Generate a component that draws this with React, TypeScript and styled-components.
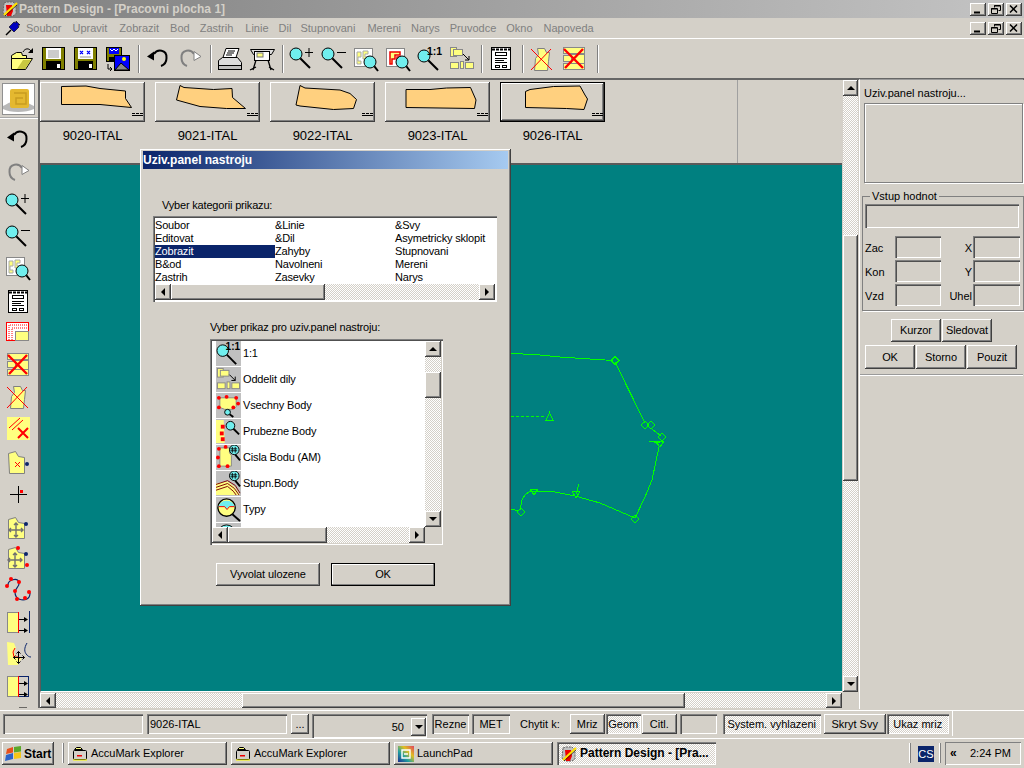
import React from "react";
import styled, { createGlobalStyle, css } from "styled-components";

const FACE = "#d4d0c8";
const FONT = `"Liberation Sans", Arial, sans-serif`;

const raised = css`
  background-color: ${FACE};
  box-shadow: inset -1px -1px #404040, inset 1px 1px #fff, inset -2px -2px #808080;
`;
const sunken = css`
  box-shadow: inset 1px 1px #808080, inset 2px 2px #505050, inset -1px -1px #fff;
`;
const dither = css`
  background: repeating-conic-gradient(#fff 0 25%, ${FACE} 0 50%) 0 0 / 2px 2px;
`;

const Global = createGlobalStyle`
  html, body { margin: 0; padding: 0; background: ${FACE}; }
  * { box-sizing: border-box; }
  #root { width: 1024px; height: 768px; overflow: hidden; }
`;

const Page = styled.div`
  position: relative;
  width: 1024px;
  height: 768px;
  overflow: hidden;
  display: flex;
  flex-direction: column;
  background: ${FACE};
  font: 11px/13px ${FONT};
  color: #000;
`;

const TitleBar = styled.div`
  height: 18px;
  display: flex;
  align-items: center;
  padding: 0 2px 0 2px;
  background: linear-gradient(90deg, #808080, #c4c4c4);
  color: ${FACE};
  font: bold 12px/16px ${FONT};
`;
const TitleText = styled.span`
  margin-left: 1px;
  flex: 1;
`;
const MenuBar = styled.div`
  height: 20px;
  display: flex;
  align-items: center;
  padding: 0 2px 0 5px;
  color: #808080;
`;
const MenuItem = styled.span<{ $ml: number }>`
  margin-left: ${(p) => p.$ml}px;
  white-space: nowrap;
`;
const MenuFill = styled.div`
  flex: 1;
`;
const WinBtns = styled.div`
  display: flex;
  gap: 2px;
`;
const WinBtn = styled.div`
  width: 16px;
  height: 13px;
  display: flex;
  align-items: center;
  justify-content: center;
  ${raised}
`;

const ToolBar = styled.div`
  height: 42px;
  display: flex;
  align-items: flex-start;
  padding: 7px 0 0 5px;
  border-top: 1px solid #fff;
  border-bottom: 2px solid #666;
`;
const Slot = styled.div`
  width: 32px;
  height: 26px;
  display: flex;
  justify-content: center;
`;
const Sep = styled.div<{ $l: number }>`
  width: 2px;
  height: 28px;
  margin: -1px 2px 0 ${(p) => p.$l}px;
  background: linear-gradient(90deg, #808080 50%, #fff 50%);
`;

const Main = styled.div`
  height: 630px;
  display: flex;
`;
const Dock = styled.div`
  width: 40px;
  height: 628px;
  overflow: hidden;
  flex: none;
  border-right: 2px solid #666;
`;
const LogoBox = styled.div`
  margin: 3px 0 0 2px;
  width: 33px;
  height: 32px;
  background: #fff;
  border: 1px solid #909090;
  display: flex;
`;
const DockRule = styled.div`
  height: 1px;
  margin-top: 3px;
  width: 38px;
  background: #fff;
  box-shadow: 0 -1px #a8a8a8;
`;
const DockIcons = styled.div`
  margin-top: 5px;
  display: flex;
  flex-direction: column;
`;
const DockSlot = styled.div<{ $h: number }>`
  height: ${(p) => p.$h}px;
  padding: 3px 0 0 5px;
  flex: none;
`;

const Center = styled.div`
  width: 820px;
  flex: none;
  display: flex;
  flex-direction: column;
`;
const CenterTop = styled.div`
  height: 612px;
  display: flex;
`;
const Stage = styled.div`
  width: 802px;
  display: flex;
  flex-direction: column;
`;
const Strip = styled.div`
  height: 83px;
  flex: none;
`;
const Tabs = styled.div`
  width: 698px;
  height: 83px;
  padding-top: 2px;
  display: flex;
  gap: 10px;
  border-right: 1px solid #a0a0a0;
`;
const Tab = styled.div`
  width: 105px;
  display: flex;
  flex-direction: column;
  align-items: center;
`;
const TabBtn = styled.div<{ $active?: boolean }>`
  width: 105px;
  height: 40px;
  ${raised}
  ${(p) =>
    p.$active &&
    css`
      box-shadow: inset 0 0 0 1px #000, inset -2px -2px #404040, inset 2px 2px #fff, inset -3px -3px #808080;
    `}
`;
const TabLabel = styled.div`
  margin-top: 6px;
  font-size: 13px;
  line-height: 15px;
  white-space: nowrap;
`;
const Canvas = styled.div`
  flex: 1;
  position: relative;
  background: #008080;
  border-top: 2px solid #5a5a5a;
  border-left: 1px solid #5a5a5a;
  border-bottom: 1px solid #fff;
  overflow: hidden;
`;
const Drawing = styled.svg`
  position: absolute;
  left: 0;
  top: 0;
`;

const ScrollBar = styled.div<{ $v?: boolean; $size: number }>`
  display: flex;
  flex-direction: ${(p) => (p.$v ? "column" : "row")};
  flex: none;
  ${(p) => (p.$v ? `width: ${p.$size}px; height: 100%;` : `height: ${p.$size}px; width: 100%;`)}
`;
const ScrollArrow = styled.div<{ $v?: boolean }>`
  flex: none;
  ${(p) => (p.$v ? "height: 16px;" : "width: 16px;")}
  display: flex;
  align-items: center;
  justify-content: center;
  ${raised}
`;
const Tri = styled.div<{ $d: "u" | "d" | "l" | "r"; $s?: number }>`
  width: 0;
  height: 0;
  border-style: solid;
  border-color: transparent;
  ${(p) => {
    const s = p.$s ?? 4;
    if (p.$d === "u") return `border-width: 0 ${s}px ${s}px; border-bottom-color:#000;`;
    if (p.$d === "d") return `border-width: ${s}px ${s}px 0; border-top-color:#000;`;
    if (p.$d === "l") return `border-width: ${s}px ${s}px ${s}px 0; border-right-color:#000;`;
    return `border-width: ${s}px 0 ${s}px ${s}px; border-left-color:#000;`;
  }}
`;
const ScrollTrack = styled.div<{ $v?: boolean }>`
  flex: 1;
  min-width: 0;
  min-height: 0;
  display: flex;
  flex-direction: ${(p) => (p.$v ? "column" : "row")};
  ${dither}
`;
const ScrollThumb = styled.div<{ $v?: boolean; $start: number; $len: number }>`
  flex: none;
  ${raised}
  ${(p) =>
    p.$v
      ? `margin-top:${p.$start}px; height:${p.$len}px;`
      : `margin-left:${p.$start}px; width:${p.$len}px;`}
`;

const Scroll = ({ v, size = 16, start, len }: { v?: boolean; size?: number; start: number; len: number }) => (
  <ScrollBar $v={v} $size={size}>
    <ScrollArrow $v={v}>
      <Tri $d={v ? "u" : "l"} />
    </ScrollArrow>
    <ScrollTrack $v={v}>
      <ScrollThumb $v={v} $start={start} $len={len} />
    </ScrollTrack>
    <ScrollArrow $v={v}>
      <Tri $d={v ? "d" : "r"} />
    </ScrollArrow>
  </ScrollBar>
);

const HScrollRow = styled.div`
  height: 15px;
  margin-top: 1px;
  width: 802px;
`;
const VScrollCol = styled.div`
  width: 15px;
  margin-left: 1px;
  height: 612px;
`;

const RightPanel = styled.div`
  width: 164px;
  height: 630px;
  flex: none;
  margin-left: -1px;
  border-left: 1px solid #fff;
  border-top: 1px solid #9a9a9a;
  margin-top: -1px;
  display: flex;
  flex-direction: column;
  padding-left: 2px;
`;
const PanelCaption = styled.div`
  margin: 7px 0 0 2px;
  height: 13px;
  white-space: nowrap;
`;
const PanelBox = styled.div`
  margin: 3px 0 0 2px;
  width: 159px;
  height: 80px;
  border: 1px solid #808080;
  box-shadow: 1px 1px #fff, inset 1px 1px #fff;
`;
const Group = styled.fieldset`
  margin: 7px 0 0 0;
  width: 161px;
  height: 121px;
  padding: 1px 3px 0 2px;
  border: 1px solid #808080;
  box-shadow: 1px 1px #fff;
`;
const GroupLegend = styled.legend`
  margin-left: 5px;
  padding: 0 2px;
  line-height: 13px;
`;
const Sunk = styled.div<{ $w?: number; $h: number }>`
  width: ${(p) => (p.$w ? `${p.$w}px` : "100%")};
  height: ${(p) => p.$h}px;
  ${sunken}
`;
const FieldGrid = styled.div`
  margin-top: 8px;
  display: grid;
  grid-template-columns: 30px 46px 32px 47px;
  grid-auto-rows: 22px;
  row-gap: 2px;
  align-items: center;
`;
const FieldLabel = styled.div<{ $right?: boolean }>`
  text-align: ${(p) => (p.$right ? "right" : "left")};
  padding: 2px ${(p) => (p.$right ? 1 : 0)}px 0 0;
`;
const PanelRow = styled.div<{ $ml: number; $mt: number }>`
  display: flex;
  gap: 1px;
  margin: ${(p) => p.$mt}px 0 0 ${(p) => p.$ml}px;
`;
const PushBtn = styled.div<{ $w: number; $h: number; $def?: boolean }>`
  width: ${(p) => p.$w}px;
  height: ${(p) => p.$h}px;
  display: flex;
  align-items: center;
  justify-content: center;
  white-space: nowrap;
  letter-spacing: -0.1px;
  ${raised}
  ${(p) =>
    p.$def &&
    css`
      box-shadow: inset 0 0 0 1px #000, inset -2px -2px #808080, inset 2px 2px #fff;
    `}
`;
const PanelRule = styled.div`
  margin: 5px 0 0 -2px;
  height: 1px;
  background: #9a9a9a;
  box-shadow: 0 1px #fff;
`;

const StatusBar = styled.div`
  height: 28px;
  flex: none;
  border-top: 1px solid #fff;
  padding: 3px 0 0 3px;
  display: flex;
  align-items: flex-start;
  position: relative;
`;
const SField = styled.div<{ $w: number; $h?: number; $ml: number; $align?: string }>`
  width: ${(p) => p.$w}px;
  height: ${(p) => p.$h ?? 20}px;
  margin-left: ${(p) => p.$ml}px;
  display: flex;
  align-items: center;
  justify-content: ${(p) => p.$align ?? "center"};
  padding: 0 3px;
  white-space: nowrap;
  ${sunken}
`;
const SBtn = styled.div<{ $w: number; $ml: number; $pressed?: boolean }>`
  width: ${(p) => p.$w}px;
  height: 20px;
  margin-left: ${(p) => p.$ml}px;
  display: flex;
  align-items: center;
  justify-content: center;
  white-space: nowrap;
  ${(p) =>
    p.$pressed
      ? css`
          ${dither}
          ${sunken}
        `
      : raised}
`;
const SText = styled.div<{ $ml: number }>`
  margin-left: ${(p) => p.$ml}px;
  line-height: 20px;
  white-space: nowrap;
`;
const Combo = styled.div`
  width: 115px;
  height: 24px;
  margin-left: 3px;
  display: flex;
  align-items: flex-end;
  justify-content: flex-end;
  padding: 0 1px 2px 0;
  ${sunken}
`;
const ComboValue = styled.span`
  margin: 0 7px 0 0;
  line-height: 17px;
`;
const ComboBtn = styled.div`
  width: 15px;
  height: 18px;
  display: flex;
  align-items: center;
  justify-content: center;
  ${raised}
`;
const StatusEnd = styled.div`
  margin-left: 3px;
  height: 25px;
  margin-top: -3px;
  width: 1px;
  background: #fff;
`;

const TaskBar = styled.div`
  height: 30px;
  flex: none;
  border-top: 1px solid #fff;
  box-shadow: 0 -1px ${FACE};
  padding: 3px 3px 0 2px;
  display: flex;
  align-items: flex-start;
`;
const StartBtn = styled.div`
  width: 52px;
  height: 23px;
  display: flex;
  align-items: center;
  padding-left: 3px;
  gap: 2px;
  font: bold 12px/14px ${FONT};
  ${raised}
`;
const Groove = styled.div<{ $ml: number }>`
  width: 2px;
  height: 20px;
  margin: 1px 0 0 ${(p) => p.$ml}px;
  background: linear-gradient(90deg, #fff 50%, #808080 50%);
`;
const TaskBtn = styled.div<{ $ml: number; $active?: boolean }>`
  width: 159px;
  height: 23px;
  margin-left: ${(p) => p.$ml}px;
  display: flex;
  align-items: center;
  padding-left: 4px;
  gap: 3px;
  white-space: nowrap;
  ${(p) =>
    p.$active
      ? css`
          ${dither}
          ${sunken}
          font-weight: bold;
          font-size: 12px;
        `
      : raised}
`;
const Tray = styled.div`
  margin-left: auto;
  display: flex;
  align-items: flex-start;
`;
const Lang = styled.div`
  width: 16px;
  height: 16px;
  margin: 4px 0 0 7px;
  background: #0a246a;
  color: #fff;
  text-align: center;
  line-height: 16px;
`;
const Clock = styled.div`
  width: 76px;
  height: 23px;
  margin-left: 4px;
  display: flex;
  align-items: center;
  padding-left: 5px;
  box-shadow: inset 1px 1px #808080, inset -1px -1px #fff;
`;
const ClockChev = styled.span`
  font-weight: bold;
  font-size: 12px;
  width: 20px;
`;

const Dialog = styled.div`
  position: absolute;
  left: 140px;
  top: 149px;
  width: 371px;
  height: 457px;
  padding: 2px 3px;
  display: flex;
  flex-direction: column;
  ${raised}
`;
const DlgTitle = styled.div`
  height: 18px;
  flex: none;
  background: linear-gradient(90deg, #0a246a, #a6caf0);
  color: #fff;
  font: bold 12px/18px ${FONT};
`;
const DlgLabel = styled.div<{ $ml: number; $mt: number }>`
  margin: ${(p) => p.$mt}px 0 0 ${(p) => p.$ml}px;
  height: 14px;
  line-height: 14px;
  letter-spacing: -0.18px;
  white-space: nowrap;
`;
const CatList = styled.div`
  margin: 4px 0 0 10px;
  width: 344px;
  height: 86px;
  padding: 2px;
  background: #fff;
  overflow: hidden;
  position: relative;
  ${sunken}
`;
const CatGrid = styled.div`
  display: grid;
  grid-template-columns: repeat(3, 120px);
  grid-auto-rows: 13px;
  height: 66px;
  padding-top: 1px;
`;
const CatCell = styled.div<{ $sel?: boolean }>`
  line-height: 13px;
  white-space: nowrap;
  letter-spacing: -0.18px;
  ${(p) => p.$sel && `background:#0a246a;color:#fff;`}
`;
const CmdList = styled.div`
  margin: 5px 0 0 67px;
  width: 233px;
  height: 206px;
  padding: 2px;
  background: ${FACE};
  ${sunken}
`;
const CmdTop = styled.div`
  height: 186px;
  display: flex;
`;
const CmdRows = styled.div`
  width: 213px;
  height: 186px;
  overflow: hidden;
  background: #fff;
  padding-left: 4px;
`;
const CmdRow = styled.div`
  height: 26px;
  display: flex;
  align-items: flex-start;
`;
const CmdIcon = styled.div`
  width: 25px;
  height: 25px;
  background: #c0c0c0;
  flex: none;
`;
const CmdText = styled.div`
  margin-left: 2px;
  line-height: 25px;
  font-size: 11px;
  letter-spacing: -0.15px;
  white-space: nowrap;
`;
const CmdBottom = styled.div`
  width: 213px;
`;
const DlgButtons = styled.div`
  display: flex;
  gap: 11px;
  margin: 18px 0 0 73px;
`;

/* ---------- drawings ---------- */
const Ico = styled.svg`
  display: block;
  flex: none;
`;
const Y = "#ffff80";
const C = "#70eeee";
const G = "#808080";

const Lens = ({ x = 7, y = 8, r = 6, hx = 21, hy = 22 }: { x?: number; y?: number; r?: number; hx?: number; hy?: number }) => (
  <>
    <line x1={x + r * 0.7} y1={y + r * 0.7} x2={hx} y2={hy} stroke="#000" strokeWidth={2} />
    <circle cx={x} cy={y} r={r} fill={C} stroke="#000" strokeWidth={1} />
  </>
);
const Floppy = ({ children }: { children?: React.ReactNode }) => (
  <>
    <rect x="2.5" y="1.5" width="22" height="22" fill="#808000" stroke="#000" />
    <rect x="6" y="2" width="15" height="11" fill="#fff" />
    <rect x="6" y="15" width="15" height="8" fill="#000" />
    <rect x="17" y="18" width="3" height="4" fill="#fff" />
    {children}
  </>
);
const Piece = ({ d }: { d: string }) => <path d={d} fill={Y} stroke={G} />;
const Dot = ({ x, y, c = "#f00", r = 2 }: { x: number; y: number; c?: string; r?: number }) => <circle cx={x} cy={y} r={r} fill={c} />;
const Move = ({ x, y }: { x: number; y: number }) => (
  <path
    d={`M${x - 7} ${y}h14M${x} ${y - 7}v14M${x - 5} ${y - 2}l-2 2 2 2M${x + 5} ${y - 2}l2 2-2 2M${x - 2} ${y - 5}l2-2 2 2M${x - 2} ${y + 5}l2 2 2-2`}
    stroke="#707070"
    strokeWidth="1.4"
    fill="none"
  />
);
const ARC = "M9 8C12 3 22 3 21.5 12C21.5 16 19 19 16 20";

const icons: Record<string, React.ReactNode> = {
  open: (
    <>
      <path d="M3.5 9.5l5-3h5l1 3h4v4h-15z" fill={Y} stroke="#000" />
      <path d="M3.5 23.5v-11h21l-7 11z" fill={Y} stroke="#000" />
      <path d="M9 23l6-9h8l-6 9z" fill="#c8c840" />
      <path d="M15 6c2-4 6-4 8-1" fill="none" stroke="#000" />
      <path d="M25 2v5h-5z" fill="#000" />
    </>
  ),
  save: <Floppy><path d="M8 5h11M8 7h11M8 9h11M8 11h11" stroke="#999" /></Floppy>,
  saveas: <Floppy><path d="M8 5l3 3m0-3l-3 3M15 5l3 3m0-3l-3 3" stroke="#00f" strokeWidth="1.2" /><path d="M8 11h11" stroke="#999" /></Floppy>,
  saveall: (
    <>
      <rect x="2.5" y="1.5" width="15" height="14" fill="#808000" stroke="#000" />
      <rect x="5" y="2" width="10" height="6" fill="#00f" />
      <path d="M6 3l2 2 2-2 2 2 2-2" stroke="#fff" fill="none" />
      <rect x="5" y="11" width="10" height="5" fill="#000" />
      <path d="M4 18v5h4M6 21l2 2-2 2" stroke="#000" fill="none" />
      <rect x="10.5" y="9.5" width="15" height="15" fill="#00f" stroke="#000" />
      <circle cx="20" cy="13" r="2" fill="#ff0" />
      <path d="M11 24l6-7 8 7z" fill="#888" stroke="#000" />
    </>
  ),
  undo: (
    <>
      <path d={ARC} fill="none" stroke="#000" strokeWidth="2" />
      <path d="M2 10.5L9 5.500 9 14.500z" fill="#000" />
    </>
  ),
  redo: (
    <g transform="translate(26 0) scale(-1 1)">
      <path d={ARC} fill="none" stroke="#808080" strokeWidth="2" />
      <path d="M2 10.5L9 5.500 9 14.500z" fill="#fff" stroke="#808080" />
    </g>
  ),
  print: (
    <>
      <path d="M9 2.5h13l-3 9H6z" fill="#fff" stroke="#000" />
      <path d="M11 5h7M10 7h7M9 9h6" stroke="#000" />
      <path d="M1.5 14.5l4-3h15l4 5v5h-23z" fill="#ddd" stroke="#000" />
      <rect x="1.5" y="19.5" width="23" height="4" fill="#c0c0c0" stroke="#000" />
    </>
  ),
  plot: (
    <>
      <path d="M1.5 3.5h24l-3 5h-18z" fill="#ddd" stroke="#000" />
      <rect x="5.5" y="5.5" width="15" height="9" fill="#fff" stroke="#000" />
      <rect x="8" y="7" width="6" height="4" fill={Y} stroke="#777" />
      <path d="M7 14L4 24M19 14l3 10M1 24l6-3M20 21l5 3" stroke="#000" strokeWidth="1.3" fill="none" />
    </>
  ),
  zin: (<><Lens /><path d="M16 6.500h8M20 2v9" stroke="#000" /></>),
  zout: (<><Lens /><path d="M16 6.500h9" stroke="#000" /></>),
  zfit: (
    <>
      <rect x="1.5" y="2.5" width="18" height="18" fill="#fff" stroke="#888" />
      <path d="M4 6h4v5H5v4h3v3H4zM10 5h5v3h-3v3h3v2h-5z" fill={Y} stroke="#aaa" />
      <Lens x={17} y={16} r={6} hx={25} hy={25} />
    </>
  ),
  zsel: (
    <>
      <rect x="1.5" y="2.5" width="18" height="18" fill="#fff" stroke="#888" />
      <path d="M5 6h10v3h-5v4H7v5H5zM12 11h5v2h-3v4h-2z" fill={Y} stroke="#e00" strokeWidth="1.5" />
      <Lens x={17} y={16} r={6} hx={25} hy={25} />
    </>
  ),
  one: (
    <>
      <Lens x={7} y={10} r={6} hx={21} hy={24} />
      <text x="10" y="9" fontFamily={FONT} fontSize="10.500" fontWeight="bold" fill="#000">1:1</text>
    </>
  ),
  sep: (
    <>
      <rect x="1.5" y="1.5" width="6" height="9" fill={Y} stroke="#888" />
      <rect x="4.5" y="3.5" width="9" height="6" fill={Y} stroke="#888" />
      <path d="M14 8l6 6M20 10v4h-4" stroke="#000" fill="none" />
      <rect x="1.5" y="16.5" width="8" height="6" fill={Y} stroke="#888" />
      <rect x="11.5" y="15.5" width="3" height="7" fill={Y} stroke="#888" />
      <rect x="16.5" y="16.5" width="8" height="6" fill={Y} stroke="#888" />
    </>
  ),
  doc: (
    <>
      <rect x="3.5" y="1.5" width="19" height="22" fill="#fff" stroke="#000" />
      <path d="M4 3.5h18" stroke="#000" strokeWidth="2" strokeDasharray="3 1" />
      <rect x="7.5" y="6.5" width="11" height="3" fill="#fff" stroke="#000" />
      <path d="M7 12.500h12M7 14.500h9M7 16.500h12" stroke="#000" />
      <rect x="7.5" y="19.5" width="4" height="2" fill="#fff" stroke="#000" />
      <rect x="14.5" y="19.5" width="4" height="2" fill="#fff" stroke="#000" />
    </>
  ),
  xpiece: (
    <>
      <Piece d="M8.5 2.5h7l2 4h3l-1 9-1 9h-13l1-12 3-4z" />
      <path d="M2 3l21 21M22 3L2 24" stroke="#f00" />
    </>
  ),
  xpieces: (
    <>
      <rect x="2.5" y="1.5" width="21" height="6" fill={Y} stroke="#888" />
      <rect x="2.5" y="9.5" width="8" height="6" fill={Y} stroke="#888" />
      <rect x="10.5" y="8.5" width="13" height="9" fill={Y} stroke="#888" />
      <rect x="2.5" y="17.5" width="21" height="6" fill={Y} stroke="#888" />
      <path d="M3 3l19 19M22 3L4 22" stroke="#f00" strokeWidth="2.4" />
    </>
  ),
  frames: (
    <>
      <rect x="1.5" y="2.5" width="22" height="18" fill="#fff" stroke="#f00" />
      <path d="M4 20V5h18M7 20V8h15" fill="none" stroke="#f00" strokeDasharray="1 1" />
      <rect x="10.5" y="11.5" width="13" height="9" fill={Y} stroke="#888" />
    </>
  ),
  linesx: (
    <>
      <rect x="2" y="1" width="23" height="23" fill={Y} />
      <path d="M4 12L15 2M7 14L18 4" stroke="#f00" />
      <path d="M13 12l10 10M23 12L13 22" stroke="#f00" strokeWidth="2" />
    </>
  ),
  piecex: (
    <>
      <Piece d="M3.5 4.5l7-2 3 5 6 1v16h-15z" />
      <path d="M10 13l5 5m0-5l-5 5" stroke="#f00" />
      <Dot x={22} y={15} c="#0a246a" />
    </>
  ),
  cross: (
    <>
      <path d="M5 14.500h17M13.500 6v17" stroke="#000" />
      <rect x="15" y="10" width="3" height="3" fill="#f00" />
    </>
  ),
  move1: (
    <>
      <Piece d="M3.5 5.5l7-2 3 5 6 1v15h-16z" />
      <Move x={11} y={16} />
      <Dot x={21} y={10} c="#0a246a" />
    </>
  ),
  move2: (
    <>
      <Piece d="M3.5 5.5l7-2 3 5 6 1v15h-16z" />
      <Move x={10} y={16} />
      <Dot x={13} y={4} />
      <Dot x={21} y={10} c="#0a246a" />
      <Dot x={22} y={21} />
    </>
  ),
  curve: (
    <>
      <path d="M3 8C3 3 12 0 14 5c1 5-4 6-4 10 0 8 8 9 12 7 2-1 3-3 3-6" fill="none" stroke="#0a246a" strokeWidth="1.2" />
      <Dot x={6} y={2} /><Dot x={2} y={9} /><Dot x={14} y={5} /><Dot x={10} y={14} /><Dot x={12} y={22} /><Dot x={20} y={21} /><Dot x={24} y={15} />
    </>
  ),
  shift1: (
    <>
      <rect x="2.5" y="3.5" width="11" height="20" fill={Y} stroke="#888" />
      <path d="M13.5 3v21" stroke="#f00" />
      <path d="M14 10.500h7M14 21.500h7" stroke="#000" />
      <path d="M19 8l4 2.500-4 2.500zM19 19l4 2.500-4 2.500z" fill="#000" />
      <path d="M24.500 2v22" stroke="#0a246a" />
    </>
  ),
  shift2: (
    <>
      <path d="M2 2l7 1 2 5-2 4 2 5 6 0-4 8H3z" fill={Y} />
      <path d="M10 8l-2 4 1 5h5v2" stroke="#f00" fill="none" />
      <path d="M13 14v12M8 20h11M13 14l-2 2m2-2l2 2M13 26l-2-2m2 2l2-2M8 20l2-2m-2 2l2 2M19 20l-2-2m2 2l-2 2" stroke="#000" transform="translate(.5 -2.500)" />
      <path d="M22 3c-3 5-3 9 0 12 1 1 2 2 4 2" stroke="#0a246a" fill="none" />
    </>
  ),
  shift3: (
    <>
      <rect x="2.5" y="3.5" width="11" height="20" fill={Y} stroke="#888" />
      <rect x="13.5" y="3.5" width="10" height="20" fill="none" stroke="#0a246a" />
      <path d="M13.5 3v21" stroke="#f00" />
      <path d="M14 10.500h7M14 21.500h7" stroke="#000" />
      <path d="M19 8l4 2.500-4 2.500zM19 19l4 2.500-4 2.500z" fill="#000" />
    </>
  ),
  clip: (
    <>
      <rect x="2" y="4" width="9" height="22" fill={Y} />
      <path d="M14 3h8" stroke="#000" />
    </>
  ),
  allpts: (
    <>
      <path d="M4 5h17v9l-3 3H9l-5-2z" fill={Y} stroke="#888" />
      <Dot x={3} y={5} /><Dot x={11} y={4} /><Dot x={21} y={5} /><Dot x={23} y={11} /><Dot x={3} y={15} /><Dot x={18} y={15} />
      <Lens x={12} y={20} r={3} hx={18} hy={25} />
    </>
  ),
  midpts: (
    <>
      <path d="M0 1h8l1 24H0z" fill={Y} />
      <rect x="5" y="6" width="4" height="4" fill="#f00" />
      <rect x="4" y="13" width="4" height="4" fill="#f00" />
      <rect x="5" y="19" width="4" height="4" fill="#f00" />
      <Lens x={15} y={7} r={4.5} hx={24} hy={16} />
    </>
  ),
  nums: (
    <>
      <path d="M4 3h10v5l2 3v11H4z" fill={Y} stroke="#888" />
      <Dot x={3} y={4} /><Dot x={10} y={2} /><Dot x={2} y={13} /><Dot x={3} y={22} /><Dot x={12} y={22} />
      <line x1="20" y1="10" x2="25" y2="16" stroke="#000" strokeWidth="2" />
      <circle cx="19" cy="5" r="5" fill={C} stroke="#000" />
      <path d="M17 2v6M20 2v6M15 4h7M15 6h7" stroke="#000" strokeWidth=".9" />
    </>
  ),
  grade: (
    <>
      <path d="M0 25V13l12-2 7 5 6 9z" fill={Y} />
      <path d="M0 14l12-4 8 5 5 8M0 17l12-4 7 5 5 7M0 20l12-4 6 5 3 4" fill="none" stroke="#800000" />
      <line x1="20" y1="10" x2="25" y2="16" stroke="#000" strokeWidth="2" />
      <circle cx="19" cy="5" r="5" fill={C} stroke="#000" />
      <path d="M17 2v6M20 2v6M15 4h7M15 6h7" stroke="#000" strokeWidth=".9" />
    </>
  ),
  types: (
    <>
      <line x1="17" y1="18" x2="25" y2="25" stroke="#000" strokeWidth="2" />
      <circle cx="11" cy="11" r="9" fill="#ffff80" stroke="#000" strokeWidth="1.4" />
      <path d="M2.5 10a9 9 0 0 1 17 0h-6l-2.500 3-2.500-3z" fill={C} />
      <path d="M3 10h6l2.500 3 2.500-3h5" fill="none" stroke="#e00" />
    </>
  ),
  partial: (
    <>
      <circle cx="11" cy="11" r="9" fill={C} stroke="#000" />
    </>
  ),
};

const Icon = ({ n, size = 26 }: { n: string; size?: number }) => (
  <Ico width={size} height={size} viewBox="0 0 26 26">{icons[n]}</Ico>
);

const Dash = () => (
  <path d="M92 31.500h3M96 31.500h3M100 31.500h3M92 33.500h11" stroke="#000" />
);
const tabs = [
  { label: "9020-ITAL", pts: "21.500,4.500 46,4 60,6.500 85.500,9 85.500,16.500 91.500,25.500 60,22.500 21.500,22.500" },
  { label: "9021-ITAL", pts: "25,3.500 29,5.500 58.500,7.500 77,6.500 77.500,15.500 90.500,26.500 71.500,26.500 45,24.500 21.500,18" },
  { label: "9022-ITAL", pts: "30,3.500 35,6 70,8 80,11.500 86.500,17.500 83.500,26.500 63.500,27.500 30,24 26,23" },
  { label: "9023-ITAL", pts: "21,7.500 45,7.500 61.500,6 85.500,5.500 91,18 89.500,26.500 21,25.500" },
  { label: "9026-ITAL", pts: "25.500,9.500 30,7.500 53.500,4.500 80,4 85,13 87.500,17 84,27.500 66.500,26.500 25.500,25.500" },
];

const menus: [string, number][] = [
  ["Soubor", 5], ["Upravit", 11], ["Zobrazit", 12], ["Bod", 11], ["Zastrih", 10], ["Linie", 12], ["Dil", 10],
  ["Stupnovani", 9], ["Mereni", 12], ["Narys", 10], ["Pruvodce", 10], ["Okno", 10], ["Napoveda", 11],
];

const WinControls = () => (
  <WinBtns>
    <WinBtn>
      <Ico width="10" height="9" viewBox="0 0 10 9"><path d="M1 7.500h6" stroke="#000" strokeWidth="2" /></Ico>
    </WinBtn>
    <WinBtn>
      <Ico width="10" height="9" viewBox="0 0 10 9"><path d="M3.500 2.500v-2h6v5h-2M.5 3.500h6v5h-6z" fill="none" stroke="#000" /><path d="M3 1h6M0 4h6" stroke="#000" /></Ico>
    </WinBtn>
    <WinBtn>
      <Ico width="10" height="9" viewBox="0 0 10 9"><path d="M1 .5l7 7M8 .5l-7 7" stroke="#000" strokeWidth="1.500" /></Ico>
    </WinBtn>
  </WinBtns>
);

const AppGlyph = ({ size = 16 }: { size?: number }) => (
  <Ico width={size} height={size} viewBox="0 0 16 16">
    <path d="M2 2l3-1 6 0 3 3 0 9-3 2-7 0-3-3z" fill="#c0c0c0" stroke="#666" strokeDasharray="2 1" />
    <path d="M4 4l6 0 1 6-2 5H5z" fill="#e00" />
    <path d="M2 14L15 2" stroke="#ffe000" strokeWidth="2.200" />
    <path d="M3 15L15 4" stroke="#000" strokeWidth=".6" />
  </Ico>
);
const Pin = () => (
  <Ico width="16" height="16" viewBox="0 0 16 16">
    <path d="M1 15l5-5" stroke="#000" strokeWidth="1.500" />
    <path d="M4 7l5-5 2 1 0-2 4 4-2 0 1 2-5 5z" fill="#0000c0" stroke="#000" strokeWidth=".6" />
  </Ico>
);
const Flag = () => (
  <Ico width="17" height="15" viewBox="0 0 17 15">
    <path d="M2 3l6-2v5.500L1 8z" fill="#e8501c" />
    <path d="M9 1l7-1v5.500L9 6.500z" fill="#5ca829" />
    <path d="M1 9l7-2v6l-8 2z" fill="#2c63c8" />
    <path d="M9 7l7-1v6l-7 1z" fill="#f5c518" />
  </Ico>
);
const FolderTask = () => (
  <Ico width="16" height="16" viewBox="0 0 16 16">
    <path d="M2.500 3.500l2-2h4l2 2h-8z" fill="#ffff80" stroke="#000" />
    <rect x="1.500" y="4.500" width="13" height="9" rx="1" fill="#d4d0c8" stroke="#000" />
    <rect x="5" y="9" width="5" height="1.500" fill="#e00" />
    <path d="M1 14h14" stroke="#ffff00" />
  </Ico>
);
const LaunchGlyph = () => (
  <Ico width="16" height="16" viewBox="0 0 16 16">
    <defs>
      <linearGradient id="lg" x1="0" y1="1" x2="1" y2="0">
        <stop offset="0" stopColor="#1e2a90" />
        <stop offset=".35" stopColor="#20a0a0" />
        <stop offset=".65" stopColor="#e0c020" />
        <stop offset="1" stopColor="#e04060" />
      </linearGradient>
    </defs>
    <rect width="16" height="16" fill="url(#lg)" />
    <path d="M4 4h8v8H4zM6 8h4" fill="none" stroke="#fff" strokeWidth="1.400" />
  </Ico>
);
const Logo = () => (
  <Ico width="31" height="30" viewBox="0 0 31 30">
    <path d="M0 22c6-3 8-5 15-5s10 2 16 5v3c-8 4-24 4-31 0z" fill="#b8b8b8" />
    <rect x="7" y="5" width="19" height="19" rx="2" fill="#e4b830" />
    <path d="M11 9h12v11H13v-6h7" fill="none" stroke="#c89c20" strokeWidth="1.500" />
  </Ico>
);

const Green = () => (
  <g fill="none" stroke="#00ff00" shapeRendering="crispEdges">
    <path d="M511 353.500L535 354.500 560 357 590 359 613 360.500" />
    <path d="M615 362L645 423M652 429L661 436M659 447L652 480 645 497 635 518" />
    <path d="M635 518L600 503 575 496 555 492 545 491 530 491 525 495 522 500 520 510" />
    <path d="M511 509L519 511M576 494L579 484M649 441L660 443" />
    <path d="M511 416.500H545" strokeDasharray="3 2" />
    <path d="M549.500 412.500l3.500 8h-7z" />
    <path d="M530 489h8l-4 6zM572 491h8l-4 7zM655 441h9l-4 6z" />
    {[[615, 360.5], [645, 425], [651, 425], [662, 437], [635, 519], [521, 512]].map(([x, y]) => (
      <path key={`${x}-${y}`} d={`M${x} ${y - 4}l4 4-4 4-4-4z`} />
    ))}
  </g>
);

const toolbar: (string | number)[] = [
  "open", "save", "saveas", "saveall", 5, "undo", "redo", 4, "print", "plot", 4,
  "zin", "zout", "zfit", "zsel", "one", "sep", 3, "doc", 5, "xpiece", "xpieces", 7,
];
const dock: [string, number][] = [
  ["undo", 33], ["redo", 32], ["zin", 32], ["zout", 31], ["zfit", 34], ["doc", 31], ["frames", 32], ["xpieces", 32],
  ["xpiece", 32], ["linesx", 33], ["piecex", 31], ["cross", 34], ["move1", 30], ["move2", 33], ["curve", 32],
  ["shift1", 31], ["shift2", 33], ["shift3", 32], ["clip", 32],
];
const cats = [
  ["Soubor", "&Linie", "&Svy"],
  ["Editovat", "&Dil", "Asymetricky sklopit"],
  ["Zobrazit", "Zahyby", "Stupnovani"],
  ["B&od", "Navolneni", "Mereni"],
  ["Zastrih", "Zasevky", "Narys"],
];
const cmds = [
  ["one", "1:1"], ["sep", "Oddelit dily"], ["allpts", "Vsechny Body"], ["midpts", "Prubezne Body"],
  ["nums", "Cisla Bodu (AM)"], ["grade", "Stupn.Body"], ["types", "Typy"], ["partial", ""],
];
const fieldRows = [["Zac", "X"], ["Kon", "Y"], ["Vzd", "Uhel"]];

export default function App() {
  return (
    <Page>
      <Global />

      <TitleBar>
        <AppGlyph />
        <TitleText>Pattern Design - [Pracovni plocha 1]</TitleText>
        <WinControls />
      </TitleBar>

      <MenuBar>
        <Pin />
        {menus.map(([m, ml]) => (
          <MenuItem key={m} $ml={ml}>{m}</MenuItem>
        ))}
        <MenuFill />
        <WinControls />
      </MenuBar>

      <ToolBar>
        {toolbar.map((t, i) =>
          typeof t === "number" ? (
            <Sep key={i} $l={t} />
          ) : (
            <Slot key={i}><Icon n={t} /></Slot>
          ),
        )}
      </ToolBar>

      <Main>
        <Dock>
          <LogoBox><Logo /></LogoBox>
          <DockRule />
          <DockIcons>
            {dock.map(([d, h], i) => (
              <DockSlot key={i} $h={h}><Icon n={d} /></DockSlot>
            ))}
          </DockIcons>
        </Dock>

        <Center>
          <CenterTop>
            <Stage>
              <Strip>
                <Tabs>
                  {tabs.map((t, i) => (
                    <Tab key={t.label}>
                      <TabBtn $active={i === 4}>
                        <Ico width="105" height="40" viewBox="0 0 105 40">
                          <polygon points={t.pts} fill="#ffd07f" stroke="#000" />
                          <Dash />
                        </Ico>
                      </TabBtn>
                      <TabLabel>{t.label}</TabLabel>
                    </Tab>
                  ))}
                </Tabs>
              </Strip>
              <Canvas>
                <Drawing width="801" height="526" viewBox="41 165 801 526"><Green /></Drawing>
              </Canvas>
            </Stage>
            <VScrollCol><Scroll v size={15} start={139} len={246} /></VScrollCol>
          </CenterTop>
          <HScrollRow><Scroll size={15} start={186} len={443} /></HScrollRow>
        </Center>

        <RightPanel>
          <PanelCaption>Uziv.panel nastroju...</PanelCaption>
          <PanelBox />
          <Group>
            <GroupLegend>Vstup hodnot</GroupLegend>
            <Sunk $w={154} $h={24} />
            <FieldGrid>
              {fieldRows.map(([a, b]) => (
                <React.Fragment key={a}>
                  <FieldLabel>{a}</FieldLabel>
                  <Sunk $w={46} $h={22} />
                  <FieldLabel $right>{b}</FieldLabel>
                  <Sunk $w={47} $h={22} />
                </React.Fragment>
              ))}
            </FieldGrid>
          </Group>
          <PanelRow $ml={29} $mt={8}>
            <PushBtn $w={50} $h={23}>Kurzor</PushBtn>
            <PushBtn $w={50} $h={23}>Sledovat</PushBtn>
          </PanelRow>
          <PanelRow $ml={3} $mt={3}>
            <PushBtn $w={50} $h={24}>OK</PushBtn>
            <PushBtn $w={50} $h={24}>Storno</PushBtn>
            <PushBtn $w={50} $h={24}>Pouzit</PushBtn>
          </PanelRow>
          <PanelRule />
        </RightPanel>
      </Main>

      <StatusBar>
        <SField $w={140} $ml={0} />
        <SField $w={140} $ml={4} $align="flex-start">9026-ITAL</SField>
        <SBtn $w={18} $ml={4}>...</SBtn>
        <Combo>
          <ComboValue>50</ComboValue>
          <ComboBtn><Tri $d="d" /></ComboBtn>
        </Combo>
        <SField $w={37} $ml={5}>Rezne</SField>
        <SField $w={38} $ml={3}>MET</SField>
        <SText $ml={10}>Chytit k:</SText>
        <SBtn $w={35} $ml={10}>Mriz</SBtn>
        <SBtn $w={35} $ml={1} $pressed>Geom</SBtn>
        <SBtn $w={35} $ml={1}>Citl.</SBtn>
        <SField $w={37} $ml={3} />
        <SBtn $w={98} $ml={6} $pressed>System. vyhlazeni</SBtn>
        <SBtn $w={62} $ml={3}>Skryt Svy</SBtn>
        <SBtn $w={62} $ml={1} $pressed>Ukaz mriz</SBtn>
        <StatusEnd />
      </StatusBar>

      <TaskBar>
        <StartBtn><Flag />Start</StartBtn>
        <Groove $ml={8} />
        <TaskBtn $ml={4}><FolderTask />AccuMark Explorer</TaskBtn>
        <TaskBtn $ml={4}><FolderTask />AccuMark Explorer</TaskBtn>
        <TaskBtn $ml={4}><LaunchGlyph />LaunchPad</TaskBtn>
        <TaskBtn $ml={4} $active><AppGlyph />Pattern Design - [Pra...</TaskBtn>
        <Tray>
          <Groove $ml={0} />
          <Lang>CS</Lang>
          <Groove $ml={5} />
          <Clock><ClockChev>«</ClockChev>2:24 PM</Clock>
        </Tray>
      </TaskBar>

      <Dialog>
        <DlgTitle>Uziv.panel nastroju</DlgTitle>
        <DlgLabel $ml={19} $mt={29}>Vyber kategorii prikazu:</DlgLabel>
        <CatList>
          <CatGrid>
            {cats.flatMap((row, r) =>
              row.map((c, i) => <CatCell key={`${r}-${i}`} $sel={r === 2 && i === 0}>{c}</CatCell>),
            )}
          </CatGrid>
          <Scroll start={0} len={154} />
        </CatList>
        <DlgLabel $ml={67} $mt={18}>Vyber prikaz pro uziv.panel nastroju:</DlgLabel>
        <CmdList>
          <CmdTop>
            <CmdRows>
              {cmds.map(([ic, t], i) => (
                <CmdRow key={i}>
                  <CmdIcon><Icon n={ic} size={25} /></CmdIcon>
                  <CmdText>{t}</CmdText>
                </CmdRow>
              ))}
            </CmdRows>
            <Scroll v start={15} len={26} />
          </CmdTop>
          <CmdBottom><Scroll start={0} len={99} /></CmdBottom>
        </CmdList>
        <DlgButtons>
          <PushBtn $w={104} $h={23}>Vyvolat ulozene</PushBtn>
          <PushBtn $w={104} $h={23} $def>OK</PushBtn>
        </DlgButtons>
      </Dialog>
    </Page>
  );
}
